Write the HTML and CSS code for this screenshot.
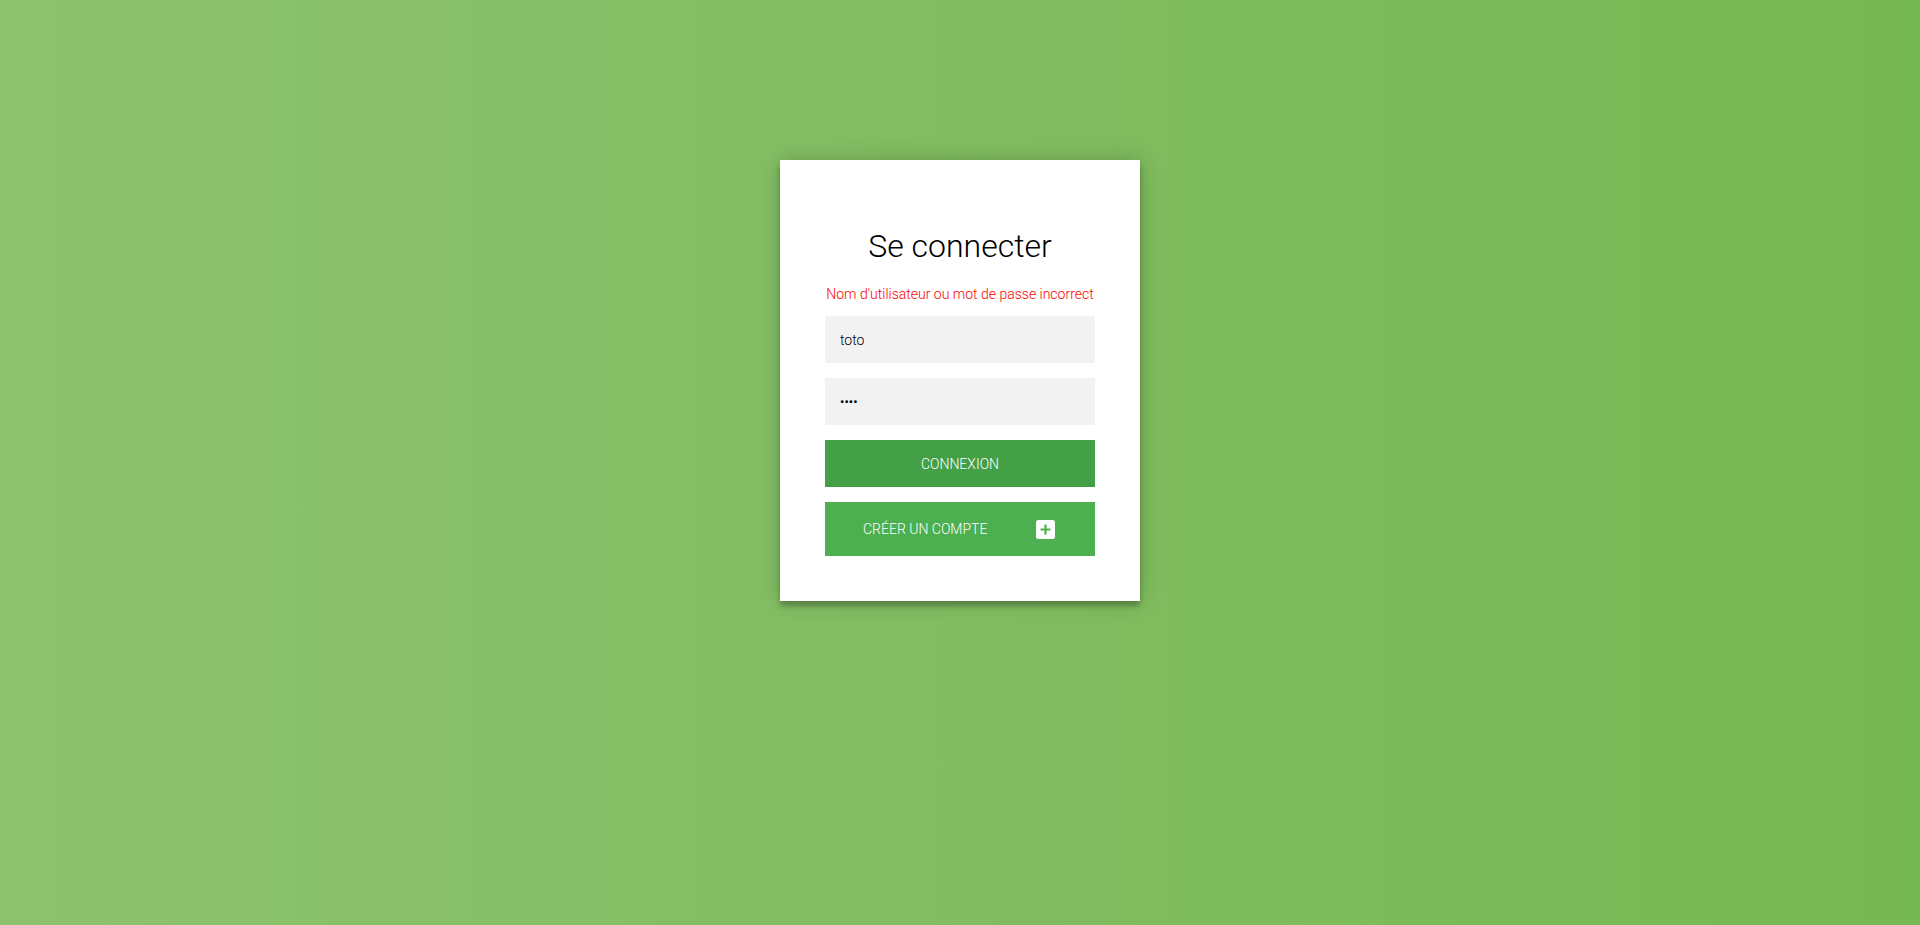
FILE: index.html
```html
<!DOCTYPE html>
<html lang="fr">
<head>
<meta charset="utf-8">
<title>Se connecter</title>
<link rel="stylesheet" href="styles.css">
</head>
<body>
<main class="page">
  <form class="card" onsubmit="return false">
    <h2 class="title">Se connecter</h2>
    <p class="error">Nom d'utilisateur ou mot de passe incorrect</p>
    <input class="field" type="text" value="toto" aria-label="Nom d'utilisateur">
    <input class="field" type="password" value="toto" aria-label="Mot de passe">
    <button class="btn btn-login" type="submit">Connexion</button>
    <button class="btn btn-create" type="button">
      <span>Créer un compte</span>
      <svg class="plus" width="19" height="19" viewBox="0 0 19 19" aria-hidden="true">
        <rect x="0" y="0" width="19" height="19" rx="2.5" fill="#ffffff"/>
        <path d="M9.5 4.5v10M4.5 9.5h10" stroke="#4caf50" stroke-width="2.2" fill="none"/>
      </svg>
    </button>
  </form>
</main>
</body>
</html>
```
FILE: styles.css
```css
html, body {
  margin: 0;
  padding: 0;
  height: 100%;
}
body {
  background: linear-gradient(to left, #76b852, #8dc26f);
  font-family: Roboto, "Liberation Sans", sans-serif;
  font-weight: 300;
}
.page {
  display: flex;
  justify-content: center;
  padding-top: 160px;
}
.card {
  width: 360px;
  box-sizing: border-box;
  background: #ffffff;
  padding: 45px;
  text-align: center;
  box-shadow: 0 0 20px 0 rgba(0, 0, 0, 0.2), 0 5px 5px 0 rgba(0, 0, 0, 0.24);
  display: flex;
  flex-direction: column;
}
.title {
  margin: 22px 0 21px;
  font-size: 32px;
  font-weight: 300;
  line-height: normal;
  color: #000000;
}
.error {
  margin: 0 0 14px;
  font-size: 14px;
  font-weight: 300;
  line-height: normal;
  white-space: nowrap;
  color: #ff0000;
}
.field {
  font-family: Roboto, "Liberation Sans", sans-serif;
  font-weight: 300;
  outline: 0;
  background: #f2f2f2;
  width: 100%;
  border: 0;
  margin: 0 0 15px;
  padding: 15px;
  box-sizing: border-box;
  font-size: 14px;
  line-height: 17px;
  height: 47px;
  color: #000000;
}
.field[type="password"] {
  font-size: 13px;
  font-weight: 400;
}
.btn {
  font-family: Roboto, "Liberation Sans", sans-serif;
  font-weight: 300;
  text-transform: uppercase;
  outline: 0;
  border: 0;
  width: 100%;
  color: #ffffff;
  font-size: 14px;
  cursor: pointer;
  box-sizing: border-box;
}
.btn-login {
  background: #43a047;
  height: 47px;
  margin: 0 0 15px;
}
.btn-create {
  background: #4caf50;
  height: 54px;
  display: flex;
  align-items: center;
  justify-content: space-between;
  padding: 0 40px 0 38px;
}
.plus {
  display: block;
  flex: none;
}
```
